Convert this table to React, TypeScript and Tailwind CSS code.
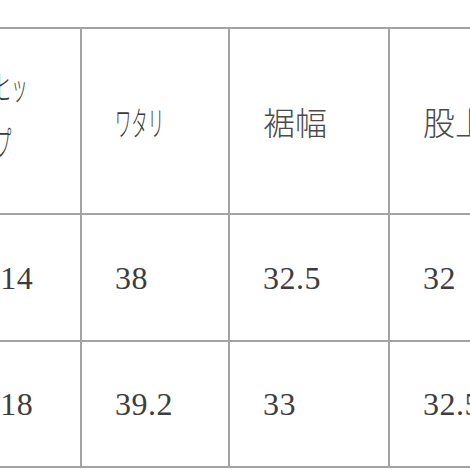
const serif = "font-['Liberation_Serif','Times_New_Roman',serif]";
const cjk = "font-['Noto_Sans_CJK_JP','Noto_Sans',sans-serif]";

function Kana({ children }: { children: React.ReactNode }) {
  return (
    <span className={`${cjk} inline-block origin-left scale-x-[0.48] whitespace-nowrap text-[34px] font-light text-[#3a3a3a]`}>
      {children}
    </span>
  );
}

const cell = "flex items-center border-r-2 border-b-2 border-[#a3a3a3] pl-[33px]";
const num = `${serif} text-[32px] leading-none tracking-[0.5px] text-[#3d3d3d]`;

export default function App() {
  const rows = [
    ["114", "38", "32.5", "32"],
    ["118", "39.2", "33", "32.5"],
  ];

  return (
    <div className="h-[470px] w-[470px] overflow-hidden bg-white pt-[27px]">
      <div className="-ml-[48px] grid w-max grid-cols-[130px_148px_160px_200px] grid-rows-[186px_127px_126px] border-t-2 border-[#a3a3a3]">
        <div className={`${cell} pl-[43px]`}>
          <div className="mb-[14px] flex flex-col gap-[4px] leading-[52px]">
            <Kana>ヒッ</Kana>
            <Kana>プ</Kana>
          </div>
        </div>
        <div className={cell}>
          <Kana>ワタリ</Kana>
        </div>
        <div className={cell}>
          <span className={`${cjk} text-[32px] font-light leading-none text-[#4a4a4a]`}>裾幅</span>
        </div>
        <div className={cell}>
          <span className={`${cjk} text-[32px] font-light leading-none text-[#4a4a4a]`}>股上</span>
        </div>

        {rows.map((r, i) =>
          r.map((v, j) => (
            <div key={`${i}-${j}`} className={cell}>
              <span className={num}>{v}</span>
            </div>
          ))
        )}
      </div>
    </div>
  );
}
